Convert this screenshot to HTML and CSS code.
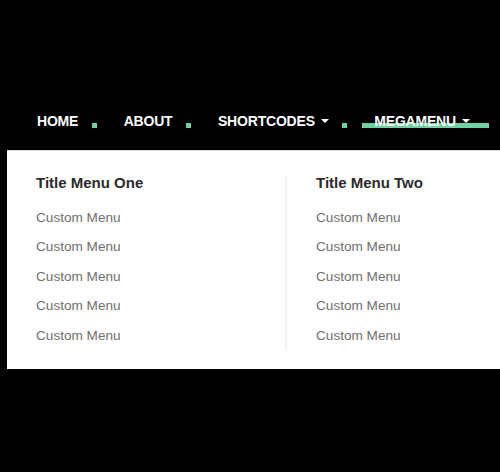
FILE: index.html
```html
<!DOCTYPE html>
<html>
<head>
<meta charset="utf-8">
<link rel="stylesheet" href="styles.css">
</head>
<body>
<nav class="nav">
  <ul class="menu">
    <li class="item"><a class="link">Home</a></li>
    <li class="sep"></li>
    <li class="item"><a class="link">About</a></li>
    <li class="sep"></li>
    <li class="item"><a class="link">Shortcodes</a><span class="caret"></span></li>
    <li class="sep"></li>
    <li class="item active"><a class="link">Megamenu</a><span class="caret"></span></li>
  </ul>
</nav>
<div class="panel">
  <div class="col">
    <h3 class="title">Title Menu One</h3>
    <ul class="list">
      <li>Custom Menu</li>
      <li>Custom Menu</li>
      <li>Custom Menu</li>
      <li>Custom Menu</li>
      <li>Custom Menu</li>
    </ul>
  </div>
  <div class="col col-two">
    <h3 class="title">Title Menu Two</h3>
    <ul class="list">
      <li>Custom Menu</li>
      <li>Custom Menu</li>
      <li>Custom Menu</li>
      <li>Custom Menu</li>
      <li>Custom Menu</li>
    </ul>
  </div>
</div>
</body>
</html>
```

FILE: styles.css
```css
html, body {
  margin: 0;
  padding: 0;
  background: #000;
  overflow: hidden;
  width: 500px;
  height: 472px;
}

.nav {
  height: 150px;
  box-sizing: border-box;
  padding: 113px 0 0 37px;
}

.menu {
  list-style: none;
  margin: 0;
  padding: 0;
  display: flex;
  align-items: flex-start;
  font-family: "Liberation Sans", Arial, sans-serif;
  font-weight: bold;
  font-size: 14px;
  line-height: 16px;
  letter-spacing: -0.2px;
  text-transform: uppercase;
  color: #fff;
}

.item {
  display: flex;
  align-items: center;
  position: relative;
}

.link {
  position: relative;
  z-index: 1;
  color: #fff;
}

.caret {
  width: 0;
  height: 0;
  margin: 0 0 0 6px;
  border-top: 4px solid #fff;
  border-left: 4.5px solid transparent;
  border-right: 4.5px solid transparent;
  position: relative;
  z-index: 1;
}

.sep {
  width: 5px;
  height: 5px;
  margin: 10px 27px 0 13.5px;
  background: #72d0a0;
}

.active::before {
  content: "";
  position: absolute;
  left: -12px;
  right: -19px;
  top: 10px;
  height: 5px;
  background: #72d0a0;
}

.panel {
  margin-left: 7px;
  background: #fff;
  border-top: 1px solid #dedede;
  display: flex;
  padding: 24px 0 19px;
  font-family: "Liberation Sans", Arial, sans-serif;
}

.col {
  width: 278px;
  flex: none;
  box-sizing: border-box;
  padding-left: 29px;
}

.col-two {
  flex: 1;
  width: auto;
  border-left: 2px solid #f2f2f2;
  padding-left: 29px;
}

.title {
  margin: 0;
  font-size: 15px;
  line-height: 16px;
  font-weight: bold;
  color: #2b2b2b;
}

.list {
  list-style: none;
  margin: 11.5px 0 0;
  padding: 0;
  font-size: 13.6px;
  line-height: 29.5px;
  color: #707070;
}
```
